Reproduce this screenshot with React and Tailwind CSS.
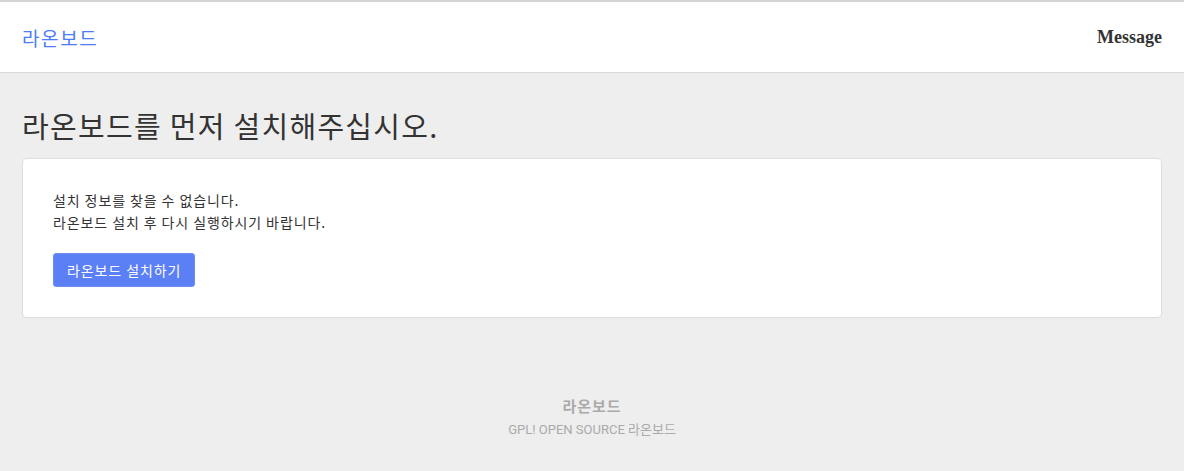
export default function App() {
  const ko = { fontFamily: '"Noto Sans CJK KR", "Noto Sans", sans-serif' };
  return (
    <div className="min-h-[471px] bg-[#eeeeee] flex flex-col" style={ko}>
      <header className="bg-white border-t-2 border-t-[#d4d4d4] border-b border-b-[#d9d9d9] h-[73px] flex items-center justify-between px-[22px]">
        <a className="text-[#4d7cf5] text-[19px] tracking-[1.6px] leading-none">라온보드</a>
        <span
          className="text-[#333] text-[18px] font-bold"
          style={{ fontFamily: '"Liberation Serif", serif' }}
        >
          Message
        </span>
      </header>
      <main className="px-[22px] pt-[32px]">
        <h1 className="text-[#333] text-[29px] tracking-[1.3px] leading-[40px] font-normal">라온보드를 먼저 설치해주십시오.</h1>
        <div className="mt-[13px] bg-white border border-[#dddddd] rounded-[4px] px-[30px] pt-[30px] pb-[30px]">
          <p className="text-[#333] text-[14px] tracking-[0.9px] leading-[22px]">
            설치 정보를 찾을 수 없습니다.
            <br />
            라온보드 설치 후 다시 실행하시기 바랍니다.
          </p>
          <button className="mt-[20px] bg-[#5b80f5] text-white text-[14px] tracking-[0.9px] h-[34px] px-[13px] rounded-[3px] border border-[#6f8ff0]">
            라온보드 설치하기
          </button>
        </div>
      </main>
      <footer className="mt-[79px] flex flex-col items-center text-[#aaaaaa]" style={{ fontFamily: 'Roboto, "Noto Sans CJK KR", sans-serif' }}>
        <div className="text-[15px] tracking-[1px] font-bold leading-[20px]">라온보드</div>
        <div className="text-[13px] leading-[20px] mt-[3px]">GPL! OPEN SOURCE 라온보드</div>
      </footer>
    </div>
  );
}
